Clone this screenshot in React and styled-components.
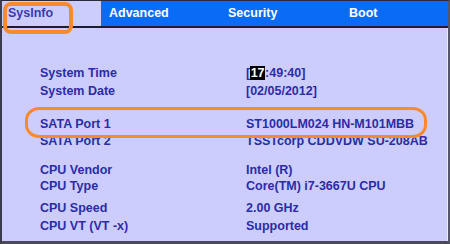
import React from "react";
import styled, { createGlobalStyle } from "styled-components";

const Global = createGlobalStyle`
  html, body { margin: 0; padding: 0; background: #cdcdfd; }
  * { box-sizing: border-box; }
`;

const Frame = styled.div`
  position: relative;
  width: 450px;
  height: 244px;
  overflow: hidden;
  background: #cdcdfd;
  border-top: 1px solid #2a2a3c;
  border-left: 2px solid #3c3c50;
  border-right: 2px solid #56566a;
  border-bottom: 3px solid #4a4a5c;
  box-shadow: inset -1px 0 0 #e8e8ff;
  font-family: "Liberation Sans", Arial, sans-serif;
  font-weight: bold;
  font-size: 12.5px;
  color: #2c2ca6;
`;

const TabBar = styled.div`
  display: flex;
  height: 27px;
  border-bottom: 2px solid #1c1c34;
`;

const ActiveTab = styled.div`
  width: 99px;
  padding-left: 6px;
  line-height: 25px;
  color: #3a3ab0;
  background: #cdcdfd;
`;

const TabStrip = styled.div`
  flex: 1;
  display: flex;
  padding-left: 8px;
  background: #0a6cf6;
`;

const Tab = styled.div`
  width: ${(p) => p.$w}px;
  line-height: 25px;
  color: #ffffff;
`;

const Body = styled.div`
  padding: 37px 0 0 38px;
  display: flex;
  flex-direction: column;
`;

const Group = styled.div`
  display: flex;
  flex-direction: column;
  gap: ${(p) => p.$gap}px;
  margin-top: ${(p) => p.$top}px;
`;

const Row = styled.div`
  display: grid;
  grid-template-columns: 206px 1fr;
  line-height: 16px;
  white-space: nowrap;
`;

const Cursor = styled.span`
  background: #000;
  color: #fff;
  padding: 0 0.5px;
`;

const Ring = styled.div`
  position: absolute;
  left: ${(p) => p.$x}px;
  top: ${(p) => p.$y}px;
  width: ${(p) => p.$w}px;
  height: ${(p) => p.$h}px;
  border: ${(p) => p.$s}px solid #f88a2e;
  border-radius: ${(p) => p.$r};
  pointer-events: none;
`;

const groups = [
  {
    top: 0,
    gap: 2,
    rows: [
      ["System Time", <>[<Cursor>17</Cursor>:49:40]</>],
      ["System Date", "[02/05/2012]"],
    ],
  },
  {
    top: 17,
    gap: 1,
    rows: [
      ["SATA Port 1", "ST1000LM024 HN-M101MBB"],
      ["SATA Port 2", "TSSTcorp CDDVDW SU-208AB"],
    ],
  },
  {
    top: 13,
    gap: 0,
    rows: [
      ["CPU Vendor", "Intel (R)"],
      ["CPU Type", "Core(TM) i7-3667U CPU"],
    ],
  },
  {
    top: 6,
    gap: 2,
    rows: [
      ["CPU Speed", "2.00 GHz"],
      ["CPU VT (VT -x)", "Supported"],
    ],
  },
];

export default function App() {
  return (
    <>
      <Global />
      <Frame>
        <TabBar>
          <ActiveTab>SysInfo</ActiveTab>
          <TabStrip>
            <Tab $w={119}>Advanced</Tab>
            <Tab $w={121}>Security</Tab>
            <Tab $w={90}>Boot</Tab>
          </TabStrip>
        </TabBar>
        <Body>
          {groups.map((g, i) => (
            <Group key={i} $top={g.top} $gap={g.gap}>
              {g.rows.map(([label, value]) => (
                <Row key={label}>
                  <span>{label}</span>
                  <span>{value}</span>
                </Row>
              ))}
            </Group>
          ))}
        </Body>
        <Ring $x={1} $y={1} $w={70} $h={32} $s={4} $r="8px" />
        <Ring $x={23} $y={106} $w={402} $h={31} $s={3.5} $r="14px / 13px" />
      </Frame>
    </>
  );
}
